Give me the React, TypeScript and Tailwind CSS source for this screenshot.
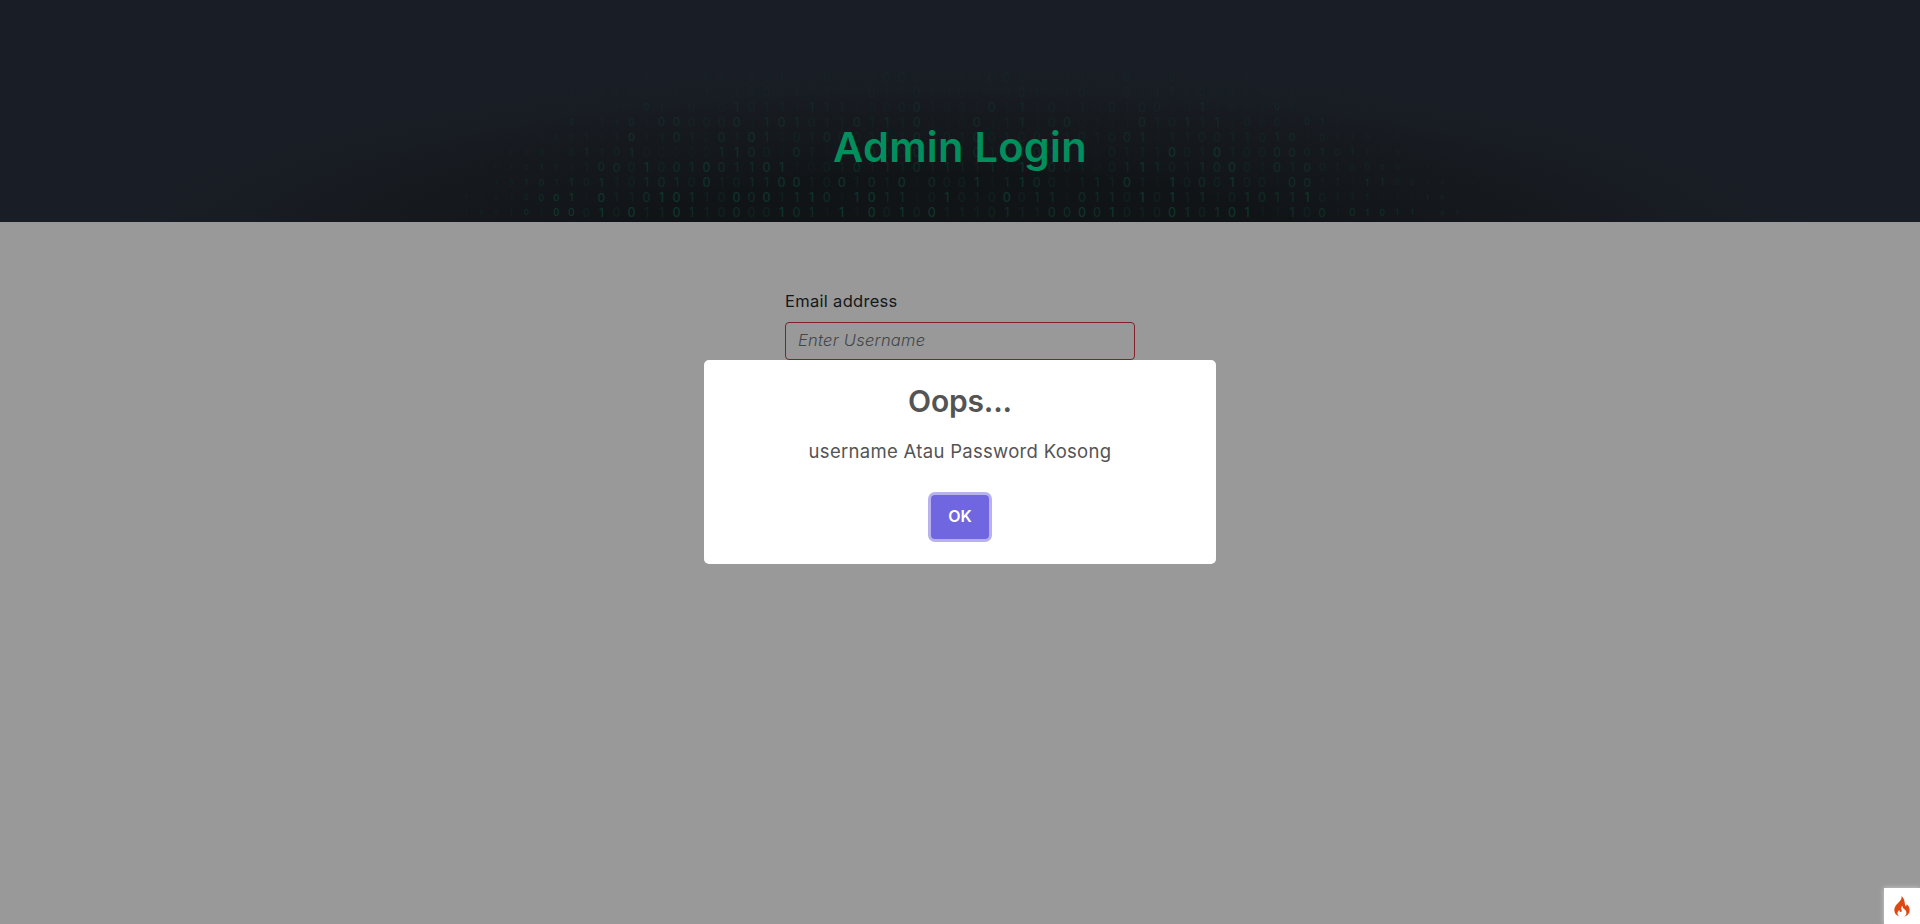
const digitRows = [
  "...........aapppaabpbaqpaba.abbaa.ppbbpp.ppppbp.b.pppbaa..............",
  ".pppap.pqbbbqppbpqpqbbaqpqppbpabpaapaabqppbaabpqqababpbpbppbppp.......",
  ".....p..qaappcqpbaarbqqprqqpaabcpaapcprpbpqabpbbparpbpacbp.pppb.......",
  ".p.ppqppcpqqcpccbbbcprcrbqqcqrqcppacpqrpbcapppcqbrqrpbabacrqapapp.....",
  "..apapqbbqpqdpqcqacqdrabqcbbqrqcpbqcbqbbqqbqbcrpqqbbqqbrcpbqqbpqp...p.",
  "pppbbqbpbrqbraaaaarscbpcqpqbcbbcrpqcqbrcbqbabqqqdbqdqbbccbrbrqpbp.bpb.",
  "qpqbqbrqpqccbsbcrdcrrdspabqcqrqcqrqqrpsqcbqabrsrbqrcdbpcqcbqbbbbpqqp..",
  ".p.qbrcqrbrqbrcrbdqbrrddqbdqcqdpcbbsprscbpqrqdqpsbcbsbbpccpqprrbbqbpbp",
  ".bpbqbcdspdqqcsdrqbdcdqrscpsdrrpbsbqbdbrrpcrrbsbsqrpbrcrrsbqqqppprcppp",
  "pqbbqcpddbsbdqqdrqbcbbscrpspdbsbdqqqbrqqccdcsbqbdrbrdspprbcpcrcrrpcrpp",
];

const opacities = [0.05, 0.1, 0.18, 0.26];

function BinaryField() {
  return (
    <svg className="absolute inset-0 h-full w-full" viewBox="0 0 1920 222" aria-hidden="true">
      {digitRows.map((row, r) =>
        row.split("").map((code, c) => {
          if (code === ".") return null;
          const zero = code < "p";
          const level = zero ? code.charCodeAt(0) - 97 : code.charCodeAt(0) - 112;
          const x = 451.3 + c * 15.015;
          const y = 77 + r * 15.06;
          const d = Math.hypot((x - 960) / 560, (212 - y) / 220);
          const scale = Math.max(0.2, Math.min(1, 0.1 + 2.4 * (1 - d)));
          const size = 12.5 * scale;
          return (
            <text
              key={`${r}-${c}`}
              x={x}
              y={y + size * 0.364}
              fontSize={size}
              textAnchor="middle"
              fill="#059669"
              opacity={opacities[level] * (0.4 + 0.06 * r)}
              fontWeight={500}
            >
              {zero ? "0" : "1"}
            </text>
          );
        }),
      )}
    </svg>
  );
}

export default function App() {
  return (
    <div className="relative flex h-[924px] w-full flex-col overflow-hidden bg-[#999999] font-['Inter',sans-serif]">
      <header className="relative flex h-[222px] shrink-0 items-end justify-center bg-[#191e26] bg-[radial-gradient(ellipse_860px_190px_at_50%_113%,#111417_0%,#111417_40%,#15191d_65%,#181c23_85%,#191e26_100%)] pb-[49px]">
        <BinaryField />
        <h1 className="relative text-[41.5px] leading-[52px] font-semibold tracking-[0.3px] whitespace-nowrap text-[#028f5e]">
          Admin Login
        </h1>
      </header>
      <main className="mx-auto flex w-[350px] flex-col pt-[67px]">
        <label htmlFor="username" className="text-[16.5px] leading-6 tracking-[0.3px] whitespace-nowrap text-[#14171a]">
          Email address
        </label>
        <input
          id="username"
          placeholder="Enter Username"
          className="mt-[9px] h-[38px] rounded-[4px] border border-[#842029] bg-transparent px-3 pb-[2px] text-[16.5px] tracking-[0.25px] italic placeholder:font-light placeholder:text-[#41464b]"
        />
      </main>
      <div className="absolute inset-0 flex items-center justify-center">
        <section role="dialog" className="flex h-[204px] w-[512px] flex-col items-center rounded-[5px] bg-white text-[#545454]">
          <h2 className="mt-[19px] text-[30px] leading-[44px] font-semibold tracking-[-0.2px]">Oops...</h2>
          <p className="mt-[15px] text-[18.5px] leading-[27px] tracking-[0.3px] whitespace-nowrap">
            username Atau Password Kosong
          </p>
          <button className="mt-[30px] h-[44px] w-[58px] rounded-[4px] bg-[#7066e0] pb-[2px] text-[16px] font-semibold text-white shadow-[0_0_0_3px_rgba(112,102,224,0.5)]">
            OK
          </button>
        </section>
      </div>
      <div className="absolute right-0 bottom-0 flex h-9 w-9 items-center justify-center bg-white shadow-[0_0_5px_rgba(255,255,255,0.5)]">
        <svg className="h-[21px] w-[16px]" viewBox="0 0 16 21" aria-hidden="true">
          <path
            fill="#dd4814"
            d="M7.4 0c.5 1.700.1 3.200-1.500 5C3.600 7.600.3 10.300.3 14.300c0 3 1.900 5.200 5.400 6.400-1.500-1-2.200-2.100-2.200-3.400 0-1.700 1.100-2.700 1.900-3.400-.1 1.100.2 1.800 1 2 1.300.3 1.700-.8 1.200-1.900-.7-1.700-.6-3.200.8-4.300 0 1.700.8 2.500 2 3.500 1.300 1.100 2.100 2.300 2 4-.1 1.500-.9 2.600-2.400 3.500 3.600-1.100 5.700-3.400 5.700-6.500 0-2.600-1.200-4.200-2.900-6.100 0 1.200-.4 1.900-1.300 2C10.400 7.600 11.300 3.200 7.400 0Z"
          />
        </svg>
      </div>
    </div>
  );
}
